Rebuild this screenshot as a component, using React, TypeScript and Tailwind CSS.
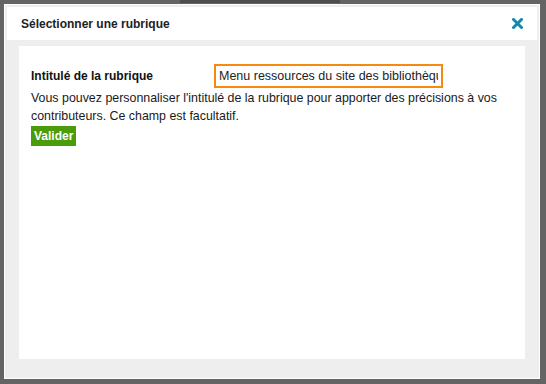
export default function App() {
  return (
    <div
      className="relative h-[384px] w-[546px] overflow-hidden bg-[#646464] pl-[4px] pt-[4px]"
      style={{ fontFamily: '"Liberation Sans", Arial, sans-serif' }}
    >
      <div className="absolute left-[180px] top-0 h-[3px] w-[160px] bg-[#4e4e4e]" />
      <div className="relative flex h-[375px] w-[536px] flex-col border border-white bg-[#eeeeee] p-[2px]">
        <header className="flex h-[33px] items-center justify-between bg-white pl-[14px] pr-[14px]">
          <h1 className="text-[12px] font-bold text-[#222]">Sélectionner une rubrique</h1>
          <button className="flex h-[12px] w-[12px] items-center justify-center" aria-label="Fermer">
            <svg width="11" height="11" viewBox="0 0 11 11">
              <path d="M1.5 1.5 L9.5 9.5 M9.5 1.5 L1.5 9.5" stroke="#1389ac" strokeWidth="3" strokeLinecap="square" />
            </svg>
          </button>
        </header>
        <div className="mx-[12px] mb-[17px] mt-[6px] flex-1 bg-white px-[12px] pt-[18px]">
          <div className="flex items-center">
            <label className="w-[183px] text-[12px] font-bold text-[#111]">Intitulé de la rubrique</label>
            <input
              defaultValue="Menu ressources du site des bibliothèques"
              className="h-[24px] w-[229px] border-2 border-[#f7890f] px-[3px] text-[12.5px] text-[#222] outline-none"
            />
          </div>
          <p className="mt-[1px] text-[12.4px] leading-[18px] text-[#1a1a1a]">
            Vous pouvez personnaliser l'intitulé de la rubrique pour apporter des précisions à vos contributeurs. Ce champ est facultatif.
          </p>
          <button className="mt-[1px] block h-[20px] bg-[#4a9c08] px-[3px] text-[12px] font-bold text-white">
            Valider
          </button>
        </div>
      </div>
    </div>
  );
}
